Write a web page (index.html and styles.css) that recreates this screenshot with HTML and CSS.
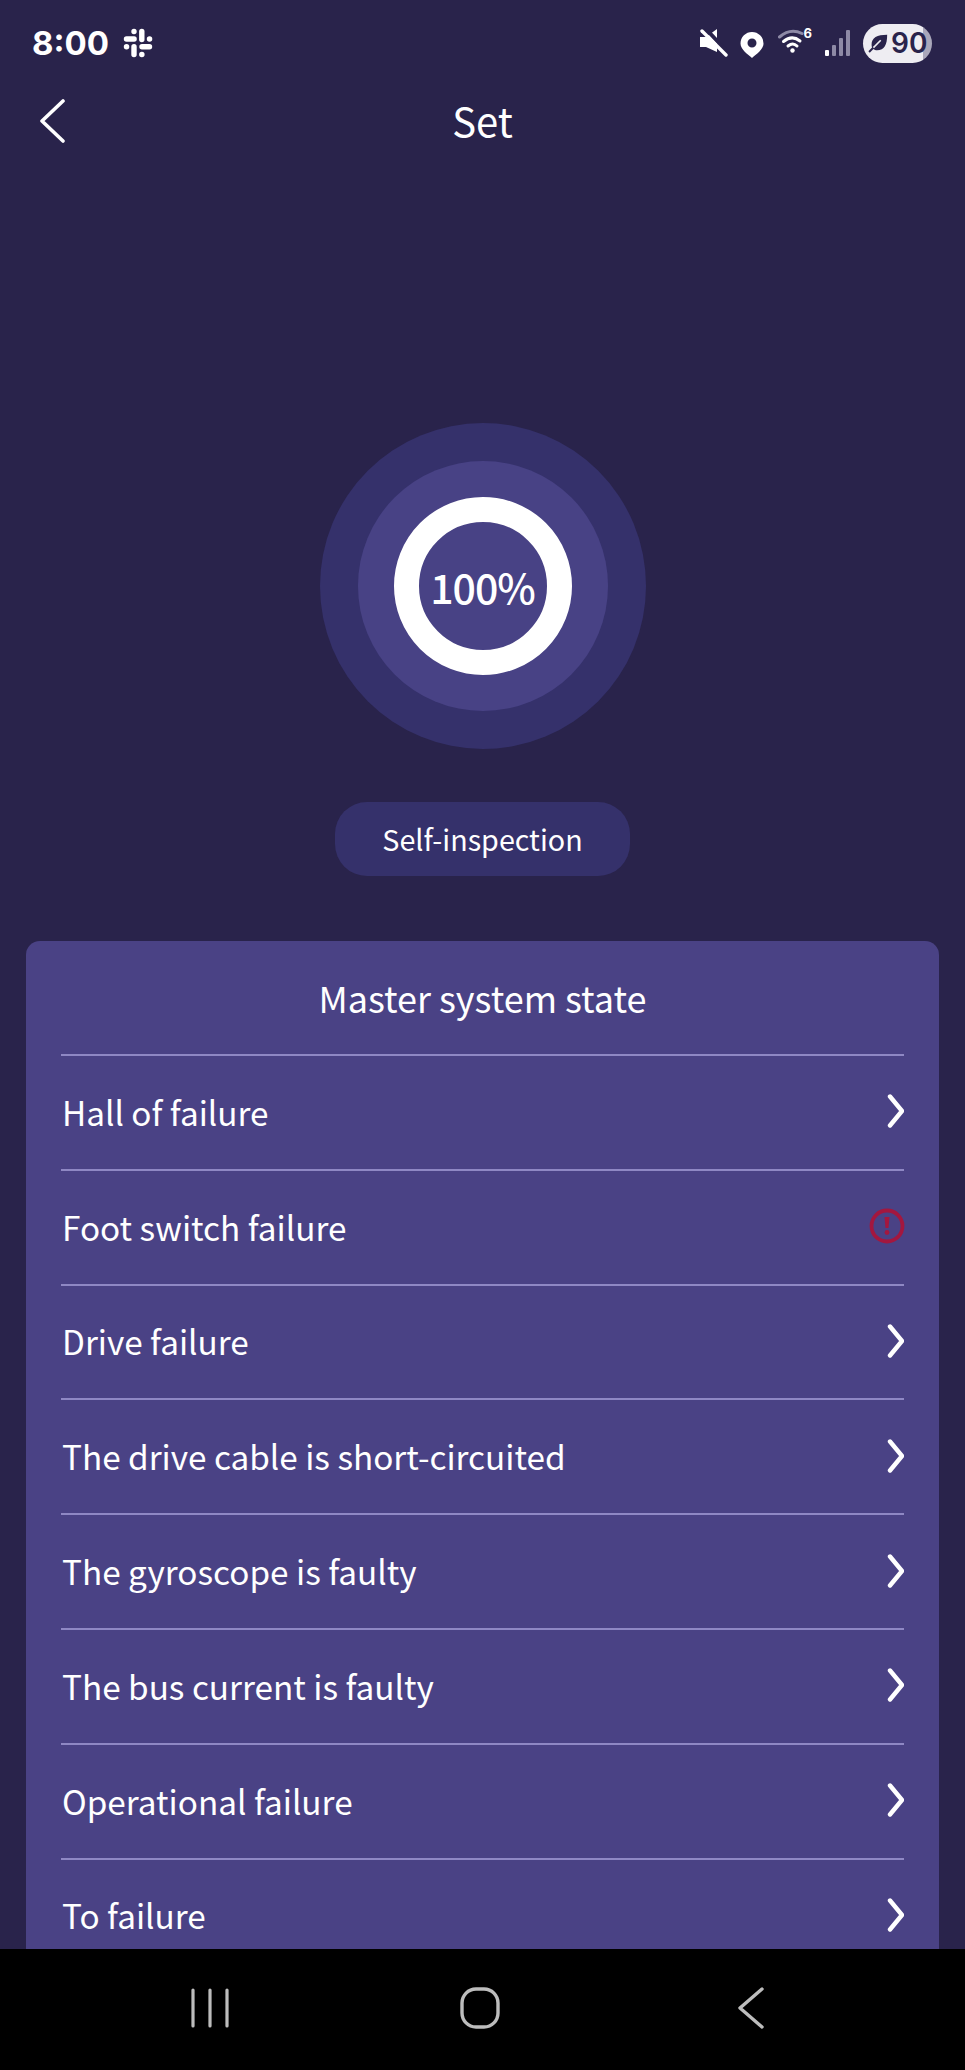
FILE: index.html
```html
<!DOCTYPE html>
<html lang="en">
<head>
    <meta charset="UTF-8">
    <meta name="viewport" content="width=device-width, initial-scale=1.0">
    <title>Set</title>
    <link rel="stylesheet" href="styles.css">
</head>
<body>

<div class="phone">
    <div class="status-bar">
        <div class="status-left">
            <span class="clock">8:00</span>
            <svg class="slack" viewBox="0 0 30 30" fill="none" stroke="#fff" stroke-width="5.400" stroke-linecap="round">
                <path d="M11 3.500v.1M3.500 11h7.600"/>
                <path d="M18.800 3.500v8"/>
                <path d="M26.500 11h.1M19 18.800h7.500"/>
                <path d="M11 18.800v7.700M3.500 18.800h.1M18.800 26.500h.1"/>
            </svg>
        </div>
        <div class="status-right">
            <svg class="ico-mute" viewBox="0 0 28 28">
                <path fill="#fff" d="M0 8h6l11-8v23L6 18H0z"/>
                <path stroke="#29234b" stroke-width="4" d="M6 0l23 25"/>
                <path stroke="#fff" stroke-width="3.400" stroke-linecap="round" d="M2 2l24 24"/>
            </svg>
            <svg class="ico-pin" viewBox="0 0 24 26">
                <path fill="#fff" fill-rule="evenodd" d="M12 0a11.500 11.500 0 0 1 11.500 11.500C23.500 17.500 16 22.500 12 26 8 22.500 .5 17.500 .5 11.500A11.500 11.500 0 0 1 12 0zm0 6.500a4.500 4.500 0 1 0 0 9 4.500 4.500 0 0 0 0-9z"/>
            </svg>
            <div class="wifi">
                <svg class="ico-wifi" viewBox="0 0 34 24" fill="none" stroke-linecap="round">
                    <path stroke="#8e8aa6" stroke-width="3" d="M1.500 8C9 1.500 17 1 24 4.500"/>
                    <path stroke="#fff" stroke-width="3" d="M5.500 12.500C11 8 17 8 22 12"/>
                    <path stroke="#fff" stroke-width="3" d="M10 17c3-2.500 6.500-2.500 9 0"/>
                    <circle cx="14.500" cy="21.500" r="2.200" fill="#fff"/>
                </svg>
                <span class="wifi-six">6</span>
            </div>
            <svg class="ico-signal" viewBox="0 0 26 26">
                <rect x="0" y="20" width="4" height="6" rx="1" fill="#fff"/>
                <rect x="7" y="15" width="4" height="11" rx="1" fill="#8e8aa6"/>
                <rect x="14" y="8" width="4" height="18" rx="1" fill="#8e8aa6"/>
                <rect x="21" y="0" width="4" height="26" rx="1" fill="#8e8aa6"/>
            </svg>
            <div class="battery">
                <svg class="ico-leaf" viewBox="0 0 24 24">
                    <path fill="#29234b" d="M22 3C11 3 5 6 5 14c0 1 .2 2 .5 3L1.500 21l1.500 1.500 4-4C8 19.500 9.500 20 11 20c8 0 11-6 11-17z"/>
                    <path stroke="#eeedf2" stroke-width="1.800" fill="none" d="M7 17l8-8"/>
                </svg>
                <span class="battery-num">90</span>
            </div>
        </div>
    </div>

    <div class="title-bar">
        <svg class="back" viewBox="0 0 26 44" fill="none" stroke="#fff" stroke-width="3.600" stroke-linecap="round" stroke-linejoin="round">
            <path d="M24 2L3 22l21 20"/>
        </svg>
        <h1>Set</h1>
    </div>

    <div class="content">
        <div class="gauge-outer">
            <div class="gauge-mid">
                <div class="gauge-ring">100%</div>
            </div>
        </div>

        <button type="button" class="inspect-btn">Self-inspection</button>

        <div class="card">
            <div class="card-title">Master system state</div>
            <div class="row"><span>Hall of failure</span>
                <svg class="chev" viewBox="0 0 18 34" fill="none" stroke="#fff" stroke-width="4.400" stroke-linecap="round" stroke-linejoin="round"><path d="M4 2.500l12 14.500-12 14.500"/></svg>
            </div>
            <div class="row"><span>Foot switch failure</span>
                <svg class="alert" viewBox="0 0 36 36">
                    <circle cx="18" cy="18" r="15.500" fill="none" stroke="#a3173f" stroke-width="3.800"/>
                    <path fill="#a3173f" d="M15.500 9h5l-1 11h-3z"/>
                    <circle cx="18" cy="24.500" r="2.400" fill="#a3173f"/>
                </svg>
            </div>
            <div class="row"><span>Drive failure</span>
                <svg class="chev" viewBox="0 0 18 34" fill="none" stroke="#fff" stroke-width="4.400" stroke-linecap="round" stroke-linejoin="round"><path d="M4 2.500l12 14.500-12 14.500"/></svg>
            </div>
            <div class="row"><span>The drive cable is short-circuited</span>
                <svg class="chev" viewBox="0 0 18 34" fill="none" stroke="#fff" stroke-width="4.400" stroke-linecap="round" stroke-linejoin="round"><path d="M4 2.500l12 14.500-12 14.500"/></svg>
            </div>
            <div class="row"><span>The gyroscope is faulty</span>
                <svg class="chev" viewBox="0 0 18 34" fill="none" stroke="#fff" stroke-width="4.400" stroke-linecap="round" stroke-linejoin="round"><path d="M4 2.500l12 14.500-12 14.500"/></svg>
            </div>
            <div class="row"><span>The bus current is faulty</span>
                <svg class="chev" viewBox="0 0 18 34" fill="none" stroke="#fff" stroke-width="4.400" stroke-linecap="round" stroke-linejoin="round"><path d="M4 2.500l12 14.500-12 14.500"/></svg>
            </div>
            <div class="row"><span>Operational failure</span>
                <svg class="chev" viewBox="0 0 18 34" fill="none" stroke="#fff" stroke-width="4.400" stroke-linecap="round" stroke-linejoin="round"><path d="M4 2.500l12 14.500-12 14.500"/></svg>
            </div>
            <div class="row"><span>To failure</span>
                <svg class="chev" viewBox="0 0 18 34" fill="none" stroke="#fff" stroke-width="4.400" stroke-linecap="round" stroke-linejoin="round"><path d="M4 2.500l12 14.500-12 14.500"/></svg>
            </div>
        </div>
    </div>

    <div class="nav-bar">
        <svg class="nav-recent" viewBox="0 0 38 40" stroke="#bdbdbd" stroke-width="3.200" stroke-linecap="round">
            <path d="M2 2v36M19 2v36M36 2v36"/>
        </svg>
        <svg class="nav-home" viewBox="0 0 40 42" fill="none" stroke="#bdbdbd" stroke-width="3.400">
            <rect x="2" y="2" width="36" height="38" rx="14"/>
        </svg>
        <svg class="nav-back" viewBox="0 0 26 42" fill="none" stroke="#bdbdbd" stroke-width="3.400" stroke-linecap="round" stroke-linejoin="round">
            <path d="M24 2L2 21l22 19"/>
        </svg>
    </div>
</div>

</body>
</html>
```
FILE: styles.css
```css
* {
    box-sizing: border-box;
}
body {
    margin: 0;
    padding: 0;
    background: #29234b;
    font-family: 'Noto Sans CJK SC', 'Noto Sans', sans-serif;
    color: #fff;
}
.phone {
    display: flex;
    flex-direction: column;
    height: 2070px;
    overflow: hidden;
}

/* status bar */
.status-bar {
    display: flex;
    justify-content: space-between;
    align-items: center;
    height: 86px;
    padding: 0 33px 0 32px;
    flex-shrink: 0;
}
.status-left {
    display: flex;
    align-items: center;
    gap: 14px;
}
.clock {
    font-family: 'Inter', sans-serif;
    font-weight: 700;
    font-size: 33px;
}
.slack {
    width: 30px;
    height: 30px;
}
.status-right {
    display: flex;
    align-items: center;
}
.ico-mute {
    width: 28px;
    height: 28px;
}
.ico-pin {
    width: 24px;
    height: 26px;
    margin-left: 12px;
    margin-top: 3px;
}
.wifi {
    position: relative;
    width: 34px;
    height: 24px;
    margin-left: 14px;
    margin-top: -4px;
}
.ico-wifi {
    display: block;
    width: 34px;
    height: 24px;
}
.wifi-six {
    position: absolute;
    right: 0;
    top: -3px;
    font-family: 'Inter', sans-serif;
    font-weight: 700;
    font-size: 13px;
    line-height: 1.2;
}
.ico-signal {
    width: 26px;
    height: 26px;
    margin-left: 13px;
}
.battery {
    display: flex;
    align-items: center;
    gap: 2px;
    width: 69px;
    height: 39px;
    margin-left: 12px;
    padding-left: 4px;
    border-radius: 20px;
    background: linear-gradient(to right, #eeedf2 87%, #a9a7ba 87%);
    color: #29234b;
}
.ico-leaf {
    width: 22px;
    height: 22px;
    flex-shrink: 0;
}
.battery-num {
    font-family: 'Inter', sans-serif;
    font-weight: 600;
    font-size: 28px;
    line-height: 1;
}

/* title */
.title-bar {
    position: relative;
    display: flex;
    justify-content: center;
    align-items: center;
    height: 70px;
    flex-shrink: 0;
}
.title-bar h1 {
    margin: 0 0 2px;
    font-size: 40px;
    font-weight: 400;
}
.back {
    position: absolute;
    left: 39px;
    top: 13px;
    width: 26px;
    height: 44px;
}

.content {
    flex: 1;
    min-height: 0;
    overflow: hidden;
    display: flex;
    flex-direction: column;
    align-items: center;
    padding: 267px 26px 0;
}

/* progress rings */
.gauge-outer, .gauge-mid {
    display: flex;
    justify-content: center;
    align-items: center;
    border-radius: 50%;
    flex-shrink: 0;
}
.gauge-outer {
    width: 326px;
    height: 326px;
    background: #35316b;
}
.gauge-mid {
    width: 250px;
    height: 250px;
    background: #484285;
}
.gauge-ring {
    display: flex;
    justify-content: center;
    align-items: center;
    width: 178px;
    height: 178px;
    border: 25px solid #fff;
    border-radius: 50%;
    font-size: 41px;
    font-weight: 500;
    letter-spacing: -1px;
}

.inspect-btn {
    width: 295px;
    height: 74px;
    margin-top: 53px;
    padding: 0 0 2px;
    border: none;
    border-radius: 32px;
    background: #35316b;
    color: #fff;
    font-family: inherit;
    font-size: 28.7px;
    flex-shrink: 0;
}

/* state list */
.card {
    width: 100%;
    margin-top: 65px;
    padding: 0 35px;
    background: #4a4285;
    border-radius: 14px 14px 0 0;
    flex-shrink: 0;
}
.card-title {
    height: 113px;
    padding-bottom: 2px;
    display: flex;
    justify-content: center;
    align-items: center;
    font-size: 36px;
}
.row {
    display: flex;
    justify-content: space-between;
    align-items: center;
    height: 114.8px;
    padding-bottom: 2px;
    border-top: 2px solid #8f88c4;
    font-size: 33.3px;
}
.row span {
    padding-left: 1px;
}
.chev {
    width: 18px;
    height: 34px;
}
.alert {
    width: 36px;
    height: 36px;
    margin-right: -1px;
}

/* system nav */
.nav-bar {
    display: flex;
    align-items: center;
    gap: 231px;
    height: 121px;
    padding: 0 0 4px 191px;
    background: #000;
    flex-shrink: 0;
}
.nav-recent {
    width: 38px;
    height: 40px;
}
.nav-home {
    width: 40px;
    height: 42px;
}
.nav-back {
    width: 26px;
    height: 42px;
    margin-left: 7px;
}
```
